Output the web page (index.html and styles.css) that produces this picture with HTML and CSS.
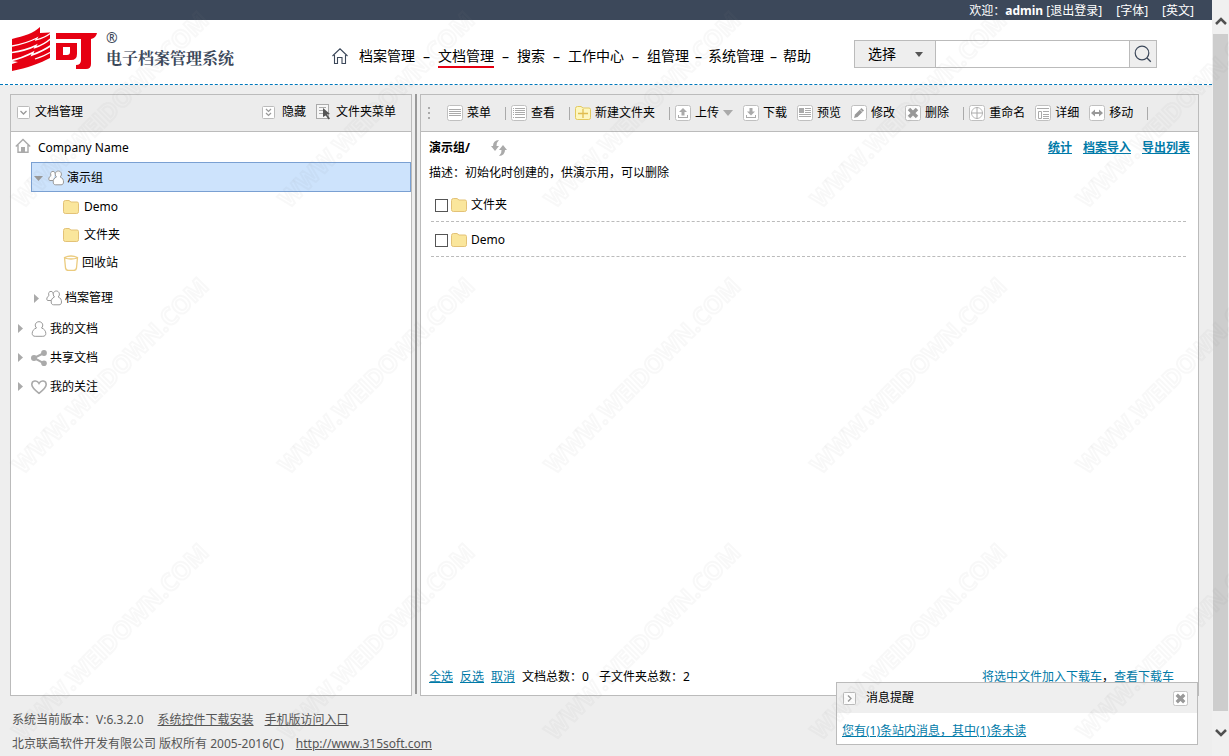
FILE: index.html
```html
<!DOCTYPE html>
<html lang="zh-CN">
<head>
<meta charset="utf-8">
<title>电子档案管理系统</title>
<link rel="stylesheet" href="styles.css">
</head>
<body>
<svg class="defs" aria-hidden="true">
  <symbol id="i-folder" viewBox="0 0 16 16"><path d="M.5 3.500v9.200q0 1.800 1.800 1.800h11.400q1.800 0 1.800-1.800V4.500q0-1.500-1.500-1.500H8L6 1.500H2.500Q.5 1.500.5 3.500z" fill="#fae69c" stroke="#e3c277"/></symbol>
  <symbol id="i-bin" viewBox="0 0 16 16"><path d="M1.500 2.500 2.500 13q.5 2.500 3 2.500h5q2.500 0 3-2.500l1-10.500q-6.500-3-13 0zm0 .5q6.500 2 13 0" fill="#fff" stroke="#ebcb7e" stroke-width="1.300"/></symbol>
  <symbol id="i-user" viewBox="0 0 16 16"><path d="M5.500 7C3 4.500 4.500.7 8 .7s5 3.800 2.500 6.300c3 1 4.300 3.200 4.300 5.500 0 2-1.300 2.800-3 2.800H4.200c-1.700 0-3-.8-3-2.800C1.200 10.200 2.500 8 5.500 7z" fill="#fff" stroke="#999"/></symbol>
  <symbol id="i-users" viewBox="0 0 16 16"><path d="M5 10.500H2c-2 0-1.500-3.500 1-5C1.800 3 3.300 1.300 5 1.400c1.500.1 2 1 2 2.100" fill="#fff" stroke="#999"/><path d="M8.500 7C6 4.500 7.500 1 10.300 1s4.300 3.500 1.900 6c2.500 1 3.300 2.800 3.300 5 0 2-1 2.800-2.500 2.800H7.700c-1.600 0-2.500-1-2.500-2.800 0-2.200.8-4 3.300-5z" fill="#fff" stroke="#999"/></symbol>
  <symbol id="i-share" viewBox="0 0 16 16"><path d="M13 3 3 8l10 5.300" fill="none" stroke="#aaa" stroke-width="2"/><g fill="#aaa"><circle cx="3" cy="8" r="3"/><circle cx="13" cy="3" r="2.900"/><circle cx="13" cy="13.200" r="2.800"/></g></symbol>
  <symbol id="i-heart" viewBox="0 0 16 16"><path d="M8 14.300C3 10.500.8 8.500.8 5.500.8 1.500 6 .6 8 4.300c2-3.700 7.200-2.800 7.200 1.200 0 3-2.200 5-7.200 8.800z" fill="#fff" stroke="#aaa" stroke-width="1.600"/></symbol>
  <symbol id="i-home" viewBox="0 0 16 16"><path d="M.8 8.500 8 1.500l7.200 7M3 7v7.300h10V7" fill="none" stroke="#aaa" stroke-width="1.400"/><path d="M6 9h4v5H6z" fill="#aaa"/></symbol>
  <symbol id="i-box" viewBox="0 0 16 16"><rect x=".5" y=".5" width="15" height="15" rx="2" fill="#fff" stroke="#c0c0c0"/></symbol>
</svg>

<div class="shell">
<div class="page">
  <div class="topbar">
    <span>欢迎：<b>admin</b> <a href="#">[退出登录]</a></span>
    <a href="#">[字体]</a>
    <a href="#">[英文]</a>
  </div>

  <header class="header">
    <div class="brand">
      <svg class="logo" viewBox="0 0 86 46" role="img" aria-label="多可">
        <path d="M0 12C12 9 22 6 28 0V6L38 5.500V31C29 36 15 41 0 44v-7l6-2-6-1z" fill="#e60012"/>
        <g fill="none" stroke="#fff">
          <path d="M0 19C12 17 19 14 25 11l-1 2C31 11 35 9 39 6" stroke-width="1.300"/>
          <path d="M0 25.500C12 24 19 21 24 18.500l-1 2C31 18 35 15 39 11.500" stroke-width="1.500"/>
          <path d="M-1 33.500C8 32 16 28 21 25.500L20 28c8-3 14-6 19-9.500" stroke-width="1.600"/>
          <path d="M23 32c6-2 11-4 16-7" stroke-width="1.200"/>
        </g>
        <g fill="#e60012">
          <path d="M44 6h41q-1 5-6 6v25q0 5-5 5H64v-4q5 0 5-5V12H44z"/>
          <path fill-rule="evenodd" d="M44 16h21v11q0 6-6 6H44zm7 4v8h4q3 0 3-3v-5z"/>
        </g>
      </svg>
      <div class="brand-text"><span class="reg">®</span><span class="product">电子档案管理系统</span></div>
    </div>
    <nav class="nav">
      <a href="#" class="nav-home" aria-label="首页"><svg class="icon" viewBox="0 0 16 16"><path d="M.5 8 8 .8 15.500 8M2.500 7v8.500h3v-6h4.500v6h3.500V7" fill="none" stroke="#3c485a" stroke-width="1.100"/></svg></a>
      <a href="#">档案管理</a><span class="dash">–</span>
      <a href="#" class="current">文档管理</a><span class="dash">–</span>
      <a href="#">搜索</a><span class="dash">–</span>
      <a href="#">工作中心</a><span class="dash">–</span>
      <a href="#">组管理</a><span class="dash narrow">–</span>
      <a href="#">系统管理</a><span class="dash narrow">–</span>
      <a href="#">帮助</a>
    </nav>
    <form class="search">
      <div class="scope">
        <select aria-label="搜索范围"><option>选择</option></select>
        <svg class="scope-arrow" viewBox="0 0 8 5"><path d="M0 0h8L4 5z" fill="#555"/></svg>
      </div>
      <input type="text" aria-label="搜索内容">
      <button type="button" aria-label="搜索"><svg viewBox="0 0 18 18"><circle cx="8" cy="8" r="6.800" fill="none" stroke="#3c485a" stroke-width="1.200"/><path d="m12.800 12.800 4 4" stroke="#3c485a" stroke-width="1.300"/></svg></button>
    </form>
  </header>

  <main class="main">
    <section class="panel side">
      <div class="panel-head side-head">
        <svg class="small" viewBox="0 0 13 13"><rect x=".5" y=".5" width="12" height="12" rx="1" fill="#fff" stroke="#bbb"/><path d="m3.500 5 3 3 3-3" fill="none" stroke="#999" stroke-width="1.300"/></svg>
        <span class="side-title">文档管理</span>
        <button type="button" class="hide"><svg class="small" viewBox="0 0 13 13"><rect x=".5" y=".5" width="12" height="12" rx="1" fill="#fff" stroke="#bbb"/><path d="m4 3 2.500 2.500L9 3M4 7l2.500 2.500L9 7" fill="none" stroke="#999" stroke-width="1.200"/></svg>隐藏</button>
        <button type="button" class="tool"><svg class="icon" viewBox="0 0 16 16"><rect x=".5" y=".5" width="12" height="14" fill="#f6f6f6" stroke="#aaa"/><path d="M3 3.500h7M3 6.500h4M3 9.500h4" stroke="#aaa"/><path d="m7 4 7 6-3 .5 3 4-1.500 1-2.700-4L7 13z" fill="#555"/></svg>文件夹菜单</button>
      </div>
      <ul class="tree">
        <li class="node root"><svg class="icon"><use href="#i-home"/></svg><span>Company Name</span></li>
        <li class="node level1 selected"><svg class="arrow" viewBox="0 0 9 9"><path d="M0 3h9L4.500 8z" fill="#999"/></svg><svg class="icon"><use href="#i-users"/></svg><span>演示组</span></li>
        <li class="node level2"><svg class="icon"><use href="#i-folder"/></svg><span>Demo</span></li>
        <li class="node level2"><svg class="icon"><use href="#i-folder"/></svg><span>文件夹</span></li>
        <li class="node level2 bin"><svg class="icon"><use href="#i-bin"/></svg><span>回收站</span></li>
        <li class="node level1 spaced"><svg class="arrow" viewBox="0 0 9 9"><path d="M2 0v9l5-4.500z" fill="#aaa"/></svg><svg class="icon"><use href="#i-users"/></svg><span>档案管理</span></li>
        <li class="node level0"><svg class="arrow" viewBox="0 0 9 9"><path d="M2 0v9l5-4.500z" fill="#aaa"/></svg><svg class="icon"><use href="#i-user"/></svg><span>我的文档</span></li>
        <li class="node level0"><svg class="arrow" viewBox="0 0 9 9"><path d="M2 0v9l5-4.500z" fill="#aaa"/></svg><svg class="icon"><use href="#i-share"/></svg><span>共享文档</span></li>
        <li class="node level0"><svg class="arrow" viewBox="0 0 9 9"><path d="M2 0v9l5-4.500z" fill="#aaa"/></svg><svg class="icon"><use href="#i-heart"/></svg><span>我的关注</span></li>
      </ul>
    </section>

    <div class="splitter"></div>

    <section class="panel content">
      <div class="panel-head toolbar">
        <svg class="grip" viewBox="0 0 3 12"><path d="M0 0h2v2H0zM0 5h2v2H0zM0 10h2v2H0z" fill="#aaa"/></svg>
        <button type="button" class="tool"><svg class="icon" viewBox="0 0 16 16"><use href="#i-box"/><path d="M2 4.500h12M2 6.500h12M2 8.500h12M2 10.500h12" stroke="#aaa"/></svg>菜单</button>
        <i class="sep"></i>
        <button type="button" class="tool"><svg class="icon" viewBox="0 0 16 16"><use href="#i-box"/><path d="M2 3.500h1m1 0h10M2 5.500h1m1 0h10M2 7.500h1m1 0h10M2 9.500h1m1 0h10M2 12.500h1m1 0h10" stroke="#aaa"/></svg>查看</button>
        <i class="sep"></i>
        <button type="button" class="tool"><svg class="icon" viewBox="0 0 16 16"><path d="M.5 3.500v9.200q0 1.800 1.800 1.800h11.400q1.800 0 1.800-1.800V4.500q0-1.500-1.500-1.500H8L6 1.500H2.500Q.5 1.500.5 3.500z" fill="#fdf7c0" stroke="#e3c95e"/><path d="M8 4v9M3 8.500h10" stroke="#e0bd50" stroke-width="1.300"/></svg>新建文件夹</button>
        <i class="sep"></i>
        <div class="group">
          <button type="button" class="tool"><svg class="icon" viewBox="0 0 16 16"><use href="#i-box"/><path d="m8 3 4 4H9.500v3.500h-3V7H4zM3 10h1v2h8v-2h1v3H3z" fill="#aaa"/></svg>上传<svg class="caret" viewBox="0 0 10 6"><path d="M0 0h10L5 6z" fill="#aaa"/></svg></button>
          <button type="button" class="tool"><svg class="icon" viewBox="0 0 16 16"><use href="#i-box"/><path d="m8 10.500-4-4h2.500V3h3v3.500H12zM3 10h1v2h8v-2h1v3H3z" fill="#aaa"/></svg>下载</button>
          <button type="button" class="tool"><svg class="icon" viewBox="0 0 16 16"><use href="#i-box"/><path d="M2 3h5v5H2z" fill="#aaa"/><path d="M8 3.500h6M8 5.500h6M8 7.500h6M2 9.500h12M2 11.500h12" stroke="#aaa"/></svg>预览</button>
          <button type="button" class="tool"><svg class="icon" viewBox="0 0 16 16"><use href="#i-box"/><path d="m3 13 1-3.500L10.500 3 13 5.500 6.500 12z" fill="#999"/><path d="M9 4.500 11.500 7" stroke="#fff" stroke-width=".7"/></svg>修改</button>
          <button type="button" class="tool"><svg class="icon" viewBox="0 0 16 16"><use href="#i-box"/><path d="m4 4 8 8m0-8-8 8" stroke="#999" stroke-width="3.500"/></svg>删除</button>
        </div>
        <i class="sep"></i>
        <div class="group">
          <button type="button" class="tool"><svg class="icon" viewBox="0 0 16 16"><use href="#i-box"/><circle cx="8" cy="8" r="5.500" fill="none" stroke="#bbb"/><path d="M8 2v12M2 8h12" stroke="#aaa"/></svg>重命名</button>
          <button type="button" class="tool"><svg class="icon" viewBox="0 0 16 16"><use href="#i-box"/><path d="M2 3.500h12M3.500 6.500h3v7h-3zM8 6.500h6M8 9.500h6M8 11.500h6M8 13.500h6" fill="none" stroke="#aaa"/></svg>详细</button>
          <button type="button" class="tool"><svg class="icon" viewBox="0 0 16 16"><use href="#i-box"/><path d="m2 8 4-3.500V7h4V4.500L14 8l-4 3.500V9H6v2.500z" fill="#999"/></svg>移动</button>
        </div>
        <i class="sep"></i>
      </div>

      <div class="location">
        <b>演示组/</b>
        <button type="button" class="refresh" aria-label="刷新"><svg class="icon" viewBox="0 0 16 16"><path d="M8 0Q2 .5 2 6H0l4 5 4-5H5.500Q5 3 8 0zM8 16q6-.5 6-6h2l-4-5-4 5h2.500Q11 13 8 16z" fill="#aaa"/></svg></button>
        <div class="actions"><a href="#">统计</a><a href="#">档案导入</a><a href="#">导出列表</a></div>
      </div>
      <p class="desc">描述：初始化时创建的，供演示用，可以删除</p>
      <ul class="files">
        <li><input type="checkbox" id="f1"><label for="f1"><svg class="icon"><use href="#i-folder"/></svg>文件夹</label></li>
        <li><input type="checkbox" id="f2"><label for="f2"><svg class="icon"><use href="#i-folder"/></svg>Demo</label></li>
      </ul>
      <div class="summary">
        <a href="#">全选</a><a href="#">反选</a><a href="#">取消</a>
        <span>文档总数：0</span><span class="folders">子文件夹总数：2</span>
        <div class="cart"><a href="#">将选中文件加入下载车</a>，<a href="#">查看下载车</a></div>
      </div>
    </section>
  </main>

  <footer class="footer">
    <p><span class="version">系统当前版本：V:6.3.2.0</span><a href="#" class="plugin">系统控件下载安装</a><a href="#">手机版访问入口</a></p>
    <p><span class="company">北京联高软件开发有限公司 版权所有 2005-2016(C)</span><a href="#">http://www.315soft.com</a></p>
  </footer>

  <aside class="notice">
    <div class="notice-head">
      <svg class="small" viewBox="0 0 13 13"><rect x=".5" y=".5" width="12" height="12" rx="1" fill="#fff" stroke="#bbb"/><path d="m5 3.500 3 3-3 3" fill="none" stroke="#999" stroke-width="1.300"/></svg>
      <span>消息提醒</span>
      <button type="button" aria-label="关闭"><svg viewBox="0 0 16 16"><use href="#i-box"/><path d="m4 4 8 8m0-8-8 8" stroke="#999" stroke-width="3.500"/></svg></button>
    </div>
    <p><a href="#">您有(1)条站内消息，其中(1)条未读</a></p>
  </aside>
</div>

<div class="scrollbar">
  <svg viewBox="0 0 12 8"><path d="m1 7 5-5 5 5" fill="none" stroke="#505050" stroke-width="2.500"/></svg>
  <div class="thumb"></div>
  <svg viewBox="0 0 12 8"><path d="m1 1 5 5 5-5" fill="none" stroke="#505050" stroke-width="2.500"/></svg>
</div>
</div>

<svg class="watermark" aria-hidden="true">
  <defs><pattern id="wm" width="266" height="266" patternUnits="userSpaceOnUse" y="-54"><text x="23" y="263" transform="rotate(-45 23 263)">WWW.WEIDOWN.COM</text></pattern></defs>
  <rect width="100%" height="100%" fill="url(#wm)"/>
</svg>
</body>
</html>
```

FILE: styles.css
```css
* { box-sizing: border-box; }
body {
  margin: 0;
  background: #eee;
  color: #000;
  font: 12px/20px "Noto Sans", "Noto Sans CJK SC", sans-serif;
}
ul, p { margin: 0; padding: 0; list-style: none; }
a { color: #007aa8; }
svg { flex: none; }
button {
  border: 0;
  padding: 0;
  background: none;
  color: inherit;
  font: inherit;
  cursor: pointer;
}
.defs { position: absolute; width: 0; height: 0; }
.icon { width: 16px; height: 16px; }
.small { width: 13px; height: 13px; }

.shell { display: flex; min-height: 100vh; }
.page { position: relative; flex: 1; min-width: 0; display: flex; flex-direction: column; }

.topbar {
  display: flex;
  justify-content: flex-end;
  gap: 14px;
  height: 20px;
  padding: 1px 18px 0 0;
  background: #3c485a;
  color: #fff;
}
.topbar a { color: #fff; text-decoration: none; }

.header {
  display: flex;
  align-items: center;
  height: 65px;
  padding: 0 55px 0 12px;
  background: #fff;
  border-bottom: 1px dashed #0079bd;
}
.brand { display: flex; align-items: center; gap: 8px; width: 320px; padding-bottom: 4px; }
.logo { width: 86px; height: 46px; }
.brand-text { display: flex; flex-direction: column; color: #3c485a; }
.reg { font-size: 14px; line-height: 18px; }
.product { font: bold 16px/24px "Liberation Serif", "Noto Serif CJK SC", "Noto Sans CJK SC", serif; }

.nav { display: flex; align-items: center; padding-top: 10px; font-size: 14px; line-height: 20px; }
.nav a { color: #000; text-decoration: none; border-bottom: 2px solid transparent; white-space: nowrap; }
.nav .current { border-color: #e60012; }
.nav-home { display: flex; margin-right: 11px; }
.dash { width: 23px; text-align: center; }
.dash.narrow { width: 19px; }

.search { display: flex; height: 28px; margin: 4px 0 0 auto; border: 1px solid #bbb; }
.scope { position: relative; display: flex; }
.scope select {
  width: 80px;
  padding: 0 13px;
  appearance: none;
  border: 0;
  border-radius: 0;
  background: #eee;
  color: #000;
  font: inherit;
  font-size: 14px;
}
.scope-arrow { position: absolute; right: 12px; top: 11px; width: 8px; height: 5px; pointer-events: none; }
.search input { width: 195px; border: solid #bbb; border-width: 0 1px; padding: 0 6px; font: inherit; }
.search button { display: flex; align-items: center; justify-content: center; width: 26px; background: #eee; }
.search button svg { width: 18px; height: 18px; }

.main { flex: 1; display: flex; padding: 9px 13px 0 10px; }
.panel { display: flex; flex-direction: column; background: #fff; border: 1px solid #bbb; }
.side { flex: 0 0 402px; }
.content { flex: 1; min-width: 0; }
.splitter { width: 2px; margin: 0 3px 2px 3px; background: #999; }
.panel-head { display: flex; align-items: center; height: 37px; background: #ececec; border-bottom: 1px solid #bbb; }
.side-head { padding: 0 15px 2px 6px; }
.side-title { margin: 0 auto 0 5px; }
.tool { display: flex; align-items: center; gap: 4px; white-space: nowrap; }
.hide { display: flex; align-items: center; gap: 7px; margin-right: 10px; }

.node { display: flex; align-items: center; gap: 2px; height: 28px; }
.root { height: 30px; padding: 0 0 0 4px; gap: 7px; }
.root .icon { margin-bottom: 3px; }
.root span { padding-top: 2px; }
.level0 { height: 29px; padding: 2px 0 0 5px; gap: 3px; }
.level0 .icon { margin-left: 3px; }
.level1 { height: 30px; margin-left: 20px; padding-left: 1px; gap: 3px; }
.level1 .icon { margin-left: 2px; }
.level2 { padding: 1px 0 0 52px; gap: 5px; }
.bin { gap: 3px; }
.selected { padding: 1px 0 0 2px; border: 1px solid #7aa0d2; background: #cde3fc; }
.spaced { margin-top: 7px; }
.arrow { width: 9px; height: 9px; }

.toolbar { padding-left: 7px; }
.grip { width: 3px; height: 12px; margin-right: 16px; }
.group { display: flex; gap: 10px; }
.sep { width: 1px; height: 13px; margin: 0 5px 0 14px; background: #aaa; }
.caret { width: 10px; height: 6px; }

.location { display: flex; align-items: center; height: 32px; padding: 0 8px; }
.refresh { display: flex; margin-left: 21px; }
.actions { display: flex; gap: 11px; margin-left: auto; font-weight: bold; }
.desc { padding: 0 8px; line-height: 18px; }
.files { padding: 5px 12px 0 10px; }
.files li { display: flex; align-items: center; gap: 3px; height: 35px; padding: 2px 0 0 4px; border-bottom: 1px dashed #bbb; }
.files input { appearance: none; width: 13px; height: 13px; margin: 0; border: 1px solid #555; background: #fff; }
.files label { display: flex; align-items: center; gap: 4px; }
.summary { display: flex; gap: 7px; margin-top: auto; padding: 0 24px 8px 8px; }
.folders { margin-left: 3px; }
.cart { margin-left: auto; }
.cart a { text-decoration: none; }

.footer { padding: 12px 12px 0; line-height: 24px; color: #555; }
.footer a { color: #555; }
.version { margin-right: 14px; }
.plugin { margin-right: 11px; }
.company { margin-right: 12px; }

.notice { position: absolute; right: 14px; bottom: 11px; width: 362px; background: #fff; border: 1px solid #bbb; }
.notice-head { display: flex; align-items: center; height: 30px; padding: 0 9px 0 6px; background: #efefef; }
.notice-head span { margin: 0 auto 0 10px; }
.notice-head button { display: flex; }
.notice-head button svg { width: 15px; height: 15px; }
.notice p { padding: 8px 5px 3px; }

.scrollbar { display: flex; flex-direction: column; align-items: center; gap: 9px; width: 17px; padding: 17px 0 19px; background: #f0f0f0; }
.scrollbar svg { width: 12px; height: 8px; }
.thumb { flex: 1; width: 15px; margin-bottom: 9px; background: #cdcdcd; }

.watermark { position: fixed; inset: 0; width: 100%; height: 100%; pointer-events: none; }
.watermark text {
  font: bold 24px "Open Sans", sans-serif;
  fill: none;
  stroke: #808080;
  stroke-opacity: 0.06;
  stroke-width: 2px;
}
```
